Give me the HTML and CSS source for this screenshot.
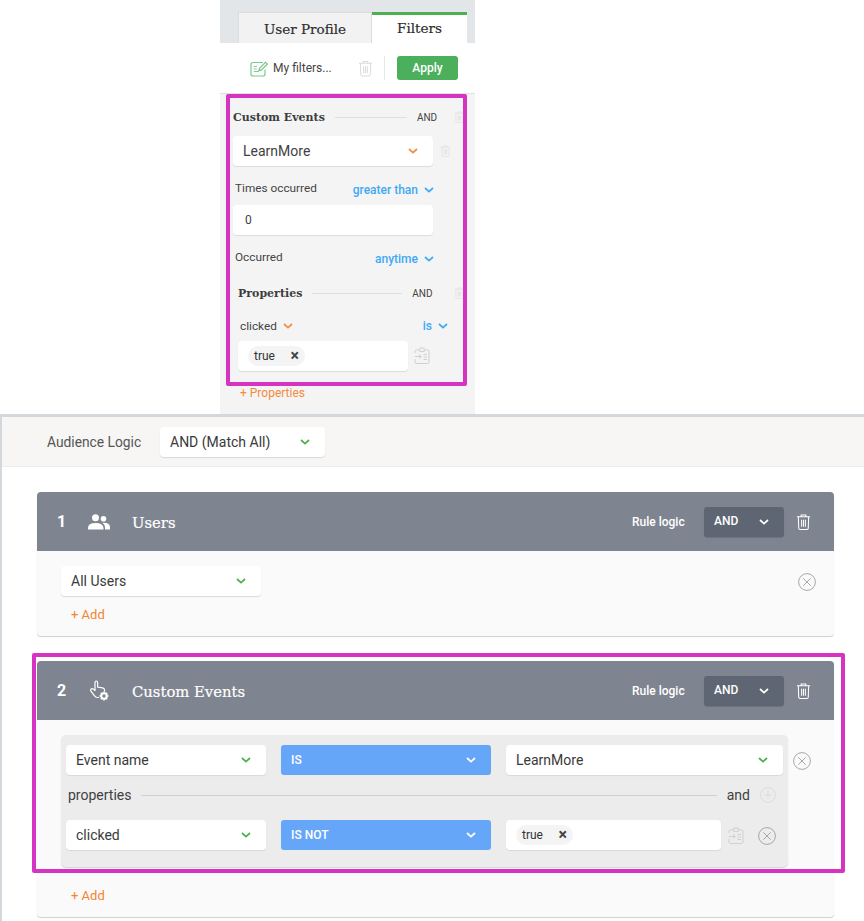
FILE: index.html
```html
<!DOCTYPE html>
<html lang="en">
<head>
<meta charset="utf-8">
<title>Filters</title>
<link rel="stylesheet" href="styles.css">
</head>
<body>
<svg class="defs" width="0" height="0" aria-hidden="true">
  <defs>
    <symbol id="chev" viewBox="0 0 10 6"><path d="M1 1l4 3.600L9 1" fill="none" stroke="currentColor" stroke-width="1.700"/></symbol>
    <symbol id="trash" viewBox="0 0 16 18"><path d="M1 3.500h14M5.500 3.300V1.600h5v1.700M2.500 3.500l.4 12.200q.1 1.300 1.400 1.300h7.400q1.300 0 1.400-1.300l.4-12.200M6 6.500v7.500M8 6.500v7.500M10 6.500v7.500" fill="none" stroke="currentColor" stroke-width="1.100"/></symbol>
    <symbol id="close" viewBox="0 0 18 18"><circle cx="9" cy="9" r="8.400" fill="none" stroke="currentColor" stroke-width=".9"/><path d="M5.300 5.300l7.400 7.400M12.700 5.300l-7.400 7.400" fill="none" stroke="currentColor" stroke-width=".9"/></symbol>
    <symbol id="paste" viewBox="0 0 16 18"><path d="M5 3H2.500Q1 3 1 4.500V6M1 12v3q0 1.500 1.500 1.500h11q1.500 0 1.500-1.500V4.500Q15 3 13.500 3H11M5.800 1h4.400v3.600H5.800zM1 9.500h6M5 7.300l2.300 2.200L5 11.700M9.500 7.500h3.500M9.500 10h3.500M9.500 12.500h3.500" fill="none" stroke="currentColor" stroke-width="1"/></symbol>
  </defs>
</svg>

<section class="filters">
  <div class="tabs">
    <div class="tab">User Profile</div>
    <div class="tab tab-active">Filters</div>
  </div>
  <div class="toolbar">
    <svg class="icon-note" viewBox="0 0 18 17"><path d="M13 2.500H3Q1 2.500 1 4.500v9.500Q1 16 3 16h10q2 0 2-2V9.500" fill="none" stroke="#7ccb8c" stroke-width="1.200"/><path d="M3.800 6.500h3M3.800 9h3M3.800 11.500h5" stroke="#7ccb8c" stroke-width="1.200"/><path d="M8.800 10.800l.7-2.600L15.500 2.200l1.900 1.900-6 6z" fill="#e9f6ec" stroke="#6cc07e" stroke-width="1.100"/></svg>
    <span class="my-filters">My filters...</span>
    <svg class="icon-trash-lg"><use href="#trash"/></svg>
    <span class="tool-sep"></span>
    <button class="apply">Apply</button>
  </div>
  <div class="panel">
    <div class="group-head group-events">
      <span class="slab-title">Custom Events</span>
      <span class="rule"></span>
      <span class="and-label">AND</span>
      <svg class="icon-trash-sm"><use href="#trash"/></svg>
    </div>
    <div class="select-row">
      <div class="field field-event"><span>LearnMore</span><svg class="chev chev-orange"><use href="#chev"/></svg></div>
      <svg class="icon-trash-sm"><use href="#trash"/></svg>
    </div>
    <div class="cond-row cond-times">
      <span class="cond-label">Times occurred</span>
      <span class="cond-op">greater than<svg class="chev"><use href="#chev"/></svg></span>
    </div>
    <div class="field field-count">0</div>
    <div class="cond-row cond-occurred">
      <span class="cond-label">Occurred</span>
      <span class="cond-op">anytime<svg class="chev"><use href="#chev"/></svg></span>
    </div>
    <div class="group-head group-props">
      <span class="slab-title">Properties</span>
      <span class="rule"></span>
      <span class="and-label">AND</span>
      <svg class="icon-trash-sm"><use href="#trash"/></svg>
    </div>
    <div class="prop-row">
      <span class="prop-name">clicked<svg class="chev chev-orange"><use href="#chev"/></svg></span>
      <span class="cond-op">is<svg class="chev"><use href="#chev"/></svg></span>
    </div>
    <div class="tag-row">
      <div class="field field-tags"><span class="tag">true<b class="tag-x">×</b></span></div>
      <svg class="icon-paste"><use href="#paste"/></svg>
    </div>
    <div class="add-link add-props">+ Properties</div>
  </div>
  <div class="highlight highlight-top"></div>
</section>

<section class="audience">
  <div class="logic-bar">
    <span class="logic-label">Audience Logic</span>
    <div class="sel sel-logic"><span>AND (Match All)</span><svg class="chev chev-green"><use href="#chev"/></svg></div>
  </div>

  <article class="card card-users">
    <header class="card-head">
      <span class="num">1</span>
      <svg class="head-icon" viewBox="0 0 22 16"><circle cx="7.500" cy="3.800" r="3.500" fill="#fff"/><circle cx="15.500" cy="4.800" r="2.800" fill="#fff"/><path d="M0 15.500v-1.600Q0 9 7.500 9t8 4.900v1.600z" fill="#fff"/><path d="M14.500 8.800Q22 8.500 22 13.200v2.300h-5v-2q0-2.700-2.500-4.700z" fill="#fff"/></svg>
      <h2 class="card-title">Users</h2>
      <span class="rule-logic">Rule logic</span>
      <div class="and-select"><span>AND</span><svg class="chev"><use href="#chev"/></svg></div>
      <svg class="head-trash"><use href="#trash"/></svg>
    </header>
    <div class="card-body body-users">
      <div class="users-row">
        <div class="sel sel-users"><span>All Users</span><svg class="chev chev-green"><use href="#chev"/></svg></div>
        <svg class="icon-close close-users"><use href="#close"/></svg>
      </div>
      <div class="add-link add-rule">+ Add</div>
    </div>
  </article>

  <article class="card card-events">
    <header class="card-head">
      <span class="num">2</span>
      <svg class="head-icon head-icon-hand" viewBox="0 0 19 21"><path d="M5 11V2.500Q5 1 6.300 1t1.300 1.500V7l5 .9q2 .5 2 2.500v1M5 10.500L3.200 9Q1.800 8.100 1 9.200t.2 2.200l3.300 4.400q1 1.700 3 1.700h1.500" fill="none" stroke="#fff" stroke-width="1.200"/><circle cx="14" cy="16" r="2.700" fill="none" stroke="#fff" stroke-width="2"/><path d="M14 11.500v2M14 18.500v2M9.500 16h2M16.500 16h2M10.800 12.800l1.400 1.400M15.800 17.800l1.400 1.400M10.800 19.200l1.400-1.400M15.800 14.200l1.400-1.400" stroke="#fff" stroke-width="1.500"/></svg>
      <h2 class="card-title">Custom Events</h2>
      <span class="rule-logic">Rule logic</span>
      <div class="and-select"><span>AND</span><svg class="chev"><use href="#chev"/></svg></div>
      <svg class="head-trash"><use href="#trash"/></svg>
    </header>
    <div class="card-body body-events">
      <div class="rules-wrap">
        <div class="rules">
          <div class="rule-line">
            <div class="sel sel-name"><span>Event name</span><svg class="chev chev-green"><use href="#chev"/></svg></div>
            <div class="op"><span>IS</span><svg class="chev"><use href="#chev"/></svg></div>
            <div class="sel sel-value"><span>LearnMore</span><svg class="chev chev-green"><use href="#chev"/></svg></div>
          </div>
          <div class="props-line">
            <span class="props-word">properties</span>
            <span class="props-rule"></span>
            <span class="props-word">and</span>
            <svg class="icon-plus" viewBox="0 0 16 16"><circle cx="8" cy="8" r="7.400" fill="none" stroke="#d9dde0" stroke-width="1"/><path d="M8 3.500v9M3.500 8h9" stroke="#d9dde0" stroke-width="1"/></svg>
          </div>
          <div class="rule-line">
            <div class="sel sel-name"><span>clicked</span><svg class="chev chev-green"><use href="#chev"/></svg></div>
            <div class="op"><span>IS NOT</span><svg class="chev"><use href="#chev"/></svg></div>
            <div class="sel sel-tags"><span class="tag tag-b">true<b class="tag-x">×</b></span></div>
            <svg class="icon-paste icon-paste-b"><use href="#paste"/></svg>
            <svg class="icon-close close-inner"><use href="#close"/></svg>
          </div>
        </div>
        <svg class="icon-close close-outer"><use href="#close"/></svg>
      </div>
      <div class="add-link add-rule add-rule-b">+ Add</div>
    </div>
  </article>
  <div class="highlight highlight-bottom"></div>
</section>
</body>
</html>
```

FILE: styles.css
```css
* { box-sizing: border-box; }
html, body { margin: 0; padding: 0; background: #fff; }
body { width: 864px; height: 921px; overflow: hidden; font-family: Roboto, "Liberation Sans", sans-serif; color: #3a3a3a; }
.defs { position: absolute; }
svg { display: block; flex: none; }

/* top panel */
.filters { position: relative; width: 255px; height: 414px; margin-left: 220px; background: #f4f4f4; }
.tabs { display: flex; height: 43px; padding: 12px 0 0 18px; background: #e3e6e9; }
.tab { width: 134px; font: 13.5px/32px "DejaVu Serif", serif; text-align: center; color: #2e2e2e; background: #f2f2f2; border: 1px solid #dcdcdc; border-bottom: 0; -webkit-text-stroke: .2px #2e2e2e; }
.tab-active { width: 95px; background: #fff; border: 0; border-top: 3px solid #4caf50; line-height: 27px; }
.toolbar { display: flex; align-items: center; height: 51px; padding-left: 30px; background: #fff; border-bottom: 1px solid #e2e2e2; }
.icon-note { width: 18px; height: 17px; }
.my-filters { margin-left: 5px; width: 85px; font-size: 12px; color: #444; }
.icon-trash-lg { width: 15px; height: 17px; color: #dcdcdc; }
.tool-sep { width: 1px; height: 24px; margin: 0 12px 0 11px; background: #e6e6e6; }
.apply { width: 61px; height: 24px; padding: 0; border: 0; border-radius: 3px; background: #4caf5c; color: #fff; font: 500 12px Roboto, sans-serif; }
.panel { padding: 0 0 0 13px; }
.group-head { display: flex; align-items: center; }
.group-events { height: 18px; margin-top: 14px; }
.slab-title { padding-top: 2px; font: 700 11px/18px "DejaVu Serif", serif; color: #3d3d3d; }
.rule { height: 1px; background: #dedede; }
.group-events .rule { width: 72px; margin-left: 10px; }
.and-label { margin-left: 10px; width: 37px; font-size: 10px; color: #444; }
.group-props .and-label { width: 42px; }
.icon-trash-sm { width: 11px; height: 14px; color: #dfdfdf; }
.select-row { display: flex; align-items: center; margin-top: 10px; gap: 7px; }
.field { display: flex; align-items: center; width: 200px; height: 30px; background: #fff; border-radius: 4px; box-shadow: 0 1px 1px #dcdcdc; font-size: 14px; color: #3f3f3f; }
.field-event { justify-content: space-between; padding: 0 15px 0 10px; }
.chev { width: 10px; height: 6px; color: #3fa9f5; margin-left: 6px; }
.chev-orange { color: #f58b3c; }
.chev-green { color: #4caf50; }
.cond-row { display: flex; justify-content: space-between; width: 201px; padding-left: 2px; }
.cond-times { height: 17px; margin-top: 14px; }
.cond-label { font-size: 11.8px; line-height: 16px; color: #444; }
.cond-op { display: flex; align-items: center; padding-top: 3px; font-size: 12px; font-weight: 500; color: #3fa9f5; height: 17px; }
.field-count { margin-top: 8px; padding-left: 12px; font-size: 12px; }
.cond-occurred { margin-top: 14px; height: 17px; }
.group-props { height: 18px; margin-top: 18px; padding-left: 5px; }
.group-props .rule { width: 90px; margin-left: 10px; }
.prop-row { display: flex; justify-content: space-between; align-items: center; width: 215px; height: 17px; margin-top: 15px; padding-left: 7px; }
.prop-name { display: flex; align-items: center; font-size: 11.8px; color: #444; }
.prop-row .cond-op { padding-top: 0; }
.tag-row { display: flex; align-items: center; margin: 7px 0 0 5px; gap: 6px; }
.field-tags { width: 170px; padding-left: 10px; }
.tag { display: inline-flex; align-items: center; justify-content: space-between; width: 57px; height: 20px; padding: 0 6px; border-radius: 10px; background: #f4f4f4; font-size: 12px; color: #333; }
.tag-x { font-size: 16px; font-weight: 700; line-height: 1; color: #444; }
.icon-paste { width: 16px; height: 18px; color: #cfcfcf; }
.add-link { font-size: 12px; color: #f58b3c; }
.add-props { margin: 15px 0 0 7px; }
.highlight { position: absolute; border: 4px solid #d633c2; border-radius: 2px; pointer-events: none; }
.highlight-top { left: 6px; top: 94px; width: 241px; height: 292px; }

/* audience */
.audience { position: relative; height: 507px; border-top: 3px solid #d3d8dc; border-left: 2px solid #d3d8dc; }
.logic-bar { display: flex; align-items: center; height: 50px; padding-left: 45px; background: #f7f6f4; border-bottom: 1px solid #ececec; }
.logic-label { width: 113px; font-size: 13.8px; color: #555; }
.sel { display: flex; align-items: center; justify-content: space-between; height: 30px; padding: 0 15px 0 10px; background: #fff; border-radius: 4px; box-shadow: 0 1px 1px #d9d9d9; font-size: 14px; color: #3a3a3a; }
.sel-logic { width: 165px; padding-right: 15px; }
.card { margin-left: 35px; width: 797px; border-radius: 4px; background: #fafafa; box-shadow: 0 1px 1px #cfcfcf; }
.card-users { margin-top: 25px; height: 144px; }
.card-events { margin-top: 25px; height: 256px; }
.card-head { display: flex; align-items: center; height: 59px; padding: 0 23px 0 20px; background: #7f8590; border-radius: 4px 4px 0 0; color: #fff; }
.num { width: 31px; font-size: 16px; font-weight: 700; }
.head-icon { width: 22px; height: 16px; }
.head-icon-hand { width: 19px; height: 21px; margin: 0 1px 0 2px; }
.card-title { flex: 1; margin: 2px 0 0 22px; font: 400 14.8px "DejaVu Serif", serif; color: #fff; -webkit-text-stroke: .2px #fff; }
.rule-logic { width: 72px; font-size: 12px; font-weight: 500; }
.and-select { display: flex; align-items: center; justify-content: space-between; width: 80px; height: 30px; padding: 0 15px 2px 10px; border-radius: 3px; background: #5f6673; font-size: 12px; font-weight: 500; box-shadow: 0 1px 1px #6d7380; }
.and-select .chev { color: #fff; margin-top: 2px; }
.head-trash { width: 15px; height: 18px; margin-left: 12px; color: #fff; }
.card-body { position: relative; }
.body-users { padding: 15px 0 0 24px; }
.users-row { display: flex; align-items: flex-start; }
.sel-users { width: 200px; }
.icon-close { width: 18px; height: 18px; color: #9e9e9e; }
.close-users { margin: 7px 0 0 537px; }
.add-rule { margin: 11px 0 0 10px; font-size: 13px; color: #f5842c; }
.body-events { padding: 15px 0 0 24px; }
.rules-wrap { display: flex; align-items: flex-start; }
.rules { width: 727px; height: 132px; padding: 10px 5px; background: #ececec; border-radius: 5px; box-shadow: 0 1px 1px #d4d4d4; }
.rule-line { display: flex; align-items: center; }
.sel-name { width: 200px; }
.op { display: flex; align-items: center; justify-content: space-between; width: 210px; height: 30px; margin: 0 15px; padding: 0 15px 0 10px; background: #66a6f8; border-radius: 3px; color: #fff; font-size: 12px; font-weight: 500; }
.op .chev { color: #fff; }
.sel-value { width: 277px; }
.sel-tags { width: 215px; padding-left: 10px; justify-content: flex-start; }
.tag-b { width: 57px; height: 20px; padding: 0 6px; font-size: 12px; background: #f4f4f4; }
.icon-paste-b { margin: 2px 0 0 7px; }
.close-inner { margin: 2px 0 0 14px; }
.close-outer { margin: 17px 0 0 5px; }
.props-line { display: flex; align-items: center; height: 45px; padding: 0 7px 5px 2px; }
.props-word { font-size: 14px; color: #3f3f3f; }
.props-rule { flex: 1; height: 1px; margin: 0 10px; background: #cfcfcf; }
.icon-plus { width: 16px; height: 16px; margin-left: 10px; }
.add-rule-b { margin-top: 21px; }
.highlight-bottom { left: 30px; top: 236px; width: 813px; height: 220px; }
```
